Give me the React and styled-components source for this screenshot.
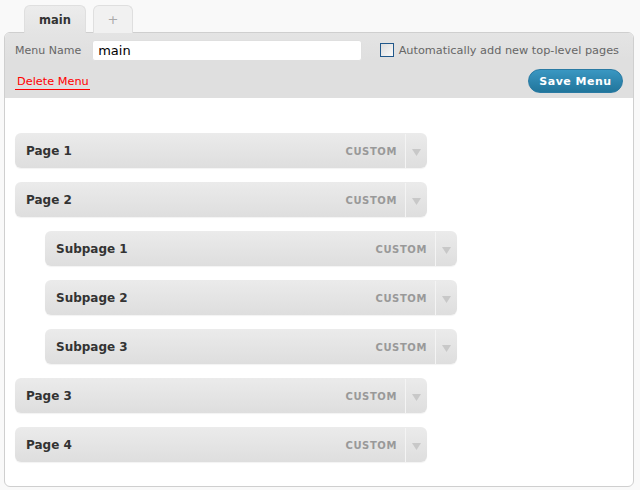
import React from "react";
import styled, { createGlobalStyle } from "styled-components";

const Global = createGlobalStyle`
  html, body { margin: 0; padding: 0; background: #f9f9f9; }
  body { font-family: "DejaVu Sans", Verdana, sans-serif; }
`;

const Page = styled.div`
  width: 640px;
  height: 490px;
  box-sizing: border-box;
  padding: 5px 6px 0 4px;
`;

const Tabs = styled.div`
  display: flex;
  gap: 7px;
  padding-left: 20px;
  height: 27px;
`;

const Tab = styled.div`
  box-sizing: border-box;
  width: ${(p) => p.$w}px;
  height: 28px;
  border: 1px solid #dfdfdf;
  border-bottom: none;
  border-radius: 6px 6px 0 0;
  background: ${(p) => (p.$active ? "linear-gradient(#ececec, #e4e4e4)" : "#f1f1f1")};
  color: ${(p) => (p.$active ? "#333" : "#aaa")};
  font-weight: ${(p) => (p.$active ? "bold" : "normal")};
  font-size: ${(p) => (p.$active ? "11.5px" : "13px")};
  display: flex;
  align-items: center;
  justify-content: center;
  position: relative;
  z-index: 1;
`;

const Panel = styled.div`
  box-sizing: border-box;
  height: 455px;
  border: 1px solid #cfcfcf;
  border-radius: 6px;
  overflow: hidden;
  background: #fff;
`;

const Header = styled.div`
  box-sizing: border-box;
  height: 65px;
  background: linear-gradient(#e4e4e4, #dfdfdf 40%);
  padding: 6px 10px 0 10px;
  display: flex;
  flex-direction: column;
`;

const HeaderRow = styled.div`
  display: flex;
  align-items: center;
  justify-content: space-between;
  height: ${(p) => p.$h}px;
  padding-top: ${(p) => p.$top || 0}px;
`;

const Label = styled.label`
  display: flex;
  align-items: center;
  font-size: ${(p) => p.$size || 11}px;
  color: #666;
  margin-right: ${(p) => p.$right || 0}px;
`;

const NameInput = styled.div`
  box-sizing: border-box;
  margin-left: 11px;
  width: 270px;
  height: 21px;
  background: #fff;
  border: 1px solid #dfdfdf;
  border-radius: 3px;
  padding: 0 5px;
  font-size: 13px;
  color: #000;
  display: flex;
  align-items: center;
`;

const Check = styled.span`
  box-sizing: border-box;
  width: 14px;
  height: 14px;
  border: 1px solid #21588b;
  background: linear-gradient(135deg, #dcdcdc, #fafafa);
  margin-right: 5px;
`;

const DeleteLink = styled.a`
  font-size: 11.3px;
  color: #f00;
  text-decoration: none;
  border-bottom: 1px solid #f00;
  padding: 0 1px 1px 2px;
  margin-top: 4px;
`;

const SaveButton = styled.button`
  box-sizing: border-box;
  width: 95px;
  height: 24px;
  margin-top: 2px;
  border: 1px solid #2a7aa3;
  border-radius: 12px;
  background: linear-gradient(#3a97c2, #21759b);
  color: #fff;
  font-family: "DejaVu Sans", Verdana, sans-serif;
  font-weight: bold;
  font-size: 11px;
  letter-spacing: 0.5px;
  padding: 0;
`;

const Body = styled.div`
  padding: 35px 0 0 10px;
  display: flex;
  flex-direction: column;
  gap: 14px;
`;

const Item = styled.div`
  box-sizing: border-box;
  margin-left: ${(p) => p.$depth * 30}px;
  width: 412px;
  height: 35px;
  padding-top: 1px;
  border-radius: 6px;
  background: linear-gradient(#ebebeb, #dedede);
  box-shadow: 0 1px 1px rgba(0, 0, 0, 0.05);
  display: flex;
  align-items: center;
`;

const Title = styled.span`
  flex: 1;
  padding-left: 11px;
  font-size: 12px;
  font-weight: bold;
  color: #333;
`;

const Type = styled.span`
  font-size: 10px;
  font-weight: bold;
  color: #999;
  letter-spacing: 0.6px;
  padding-right: 8px;
`;

const Toggle = styled.span`
  box-sizing: border-box;
  width: 22px;
  height: 100%;
  border-left: 1px solid #f4f4f4;
  display: flex;
  align-items: center;
  justify-content: center;
  padding-top: 2px;
`;

const items = [
  ["Page 1", 0],
  ["Page 2", 0],
  ["Subpage 1", 1],
  ["Subpage 2", 1],
  ["Subpage 3", 1],
  ["Page 3", 0],
  ["Page 4", 0],
];

export default function App() {
  return (
    <Page>
      <Global />
      <Tabs>
        <Tab $active $w={62}>main</Tab>
        <Tab $w={40}>+</Tab>
      </Tabs>
      <Panel>
        <Header>
          <HeaderRow $h={22}>
            <Label>
              Menu Name
              <NameInput>main</NameInput>
            </Label>
            <Label $size={11.3} $right={4}>
              <Check />
              Automatically add new top-level pages
            </Label>
          </HeaderRow>
          <HeaderRow $h={34} $top={2}>
            <DeleteLink>Delete Menu</DeleteLink>
            <SaveButton>Save Menu</SaveButton>
          </HeaderRow>
        </Header>
        <Body>
          {items.map(([t, d]) => (
            <Item key={t} $depth={d}>
              <Title>{t}</Title>
              <Type>CUSTOM</Type>
              <Toggle>
                <svg width="9" height="7" viewBox="0 0 9 7">
                  <path d="M0 0h9L4.5 7z" fill="#c8c8c8" />
                </svg>
              </Toggle>
            </Item>
          ))}
        </Body>
      </Panel>
    </Page>
  );
}
